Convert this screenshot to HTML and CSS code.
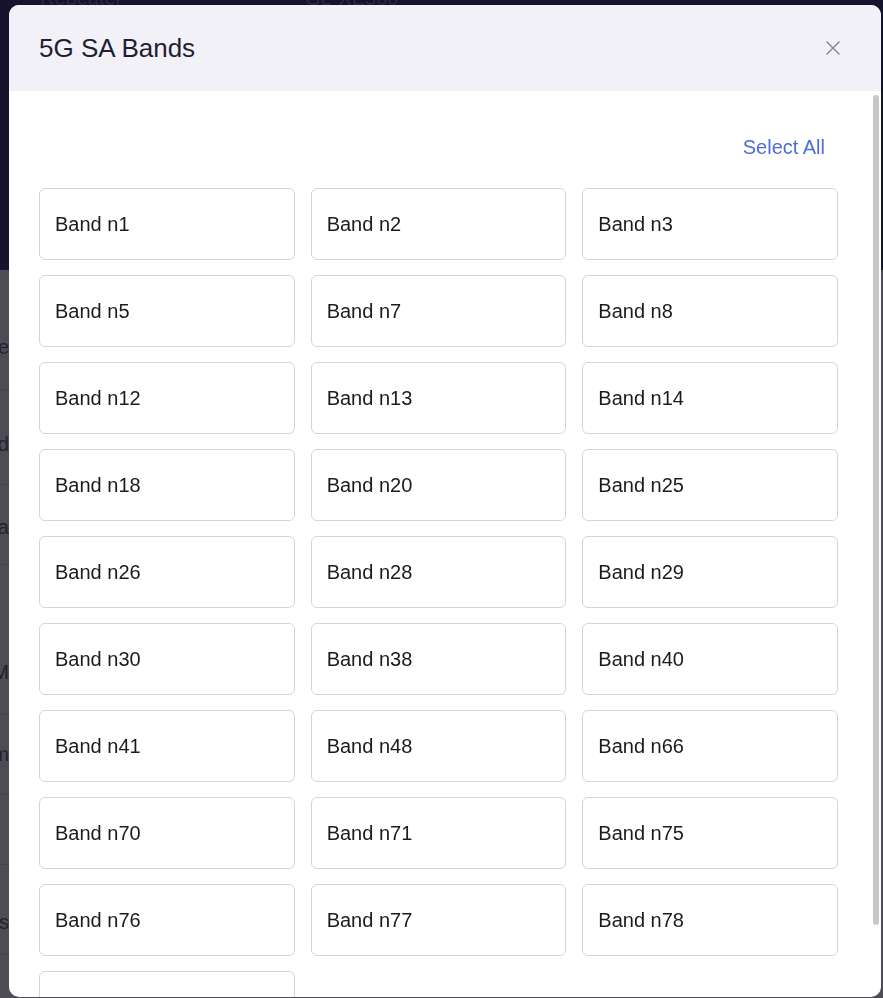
FILE: index.html
```html
<!DOCTYPE html>
<html>
    <head>
        <link rel="stylesheet" href="styles.css">
    </head>
    <body>
        <div class="backdrop">
            <div class="backdrop-top">
                <span class="faint-left">Repeater</span>
                <span class="faint-right">GL-XE300</span>
            </div>
            <div class="backdrop-rows">
                <div class="bg-row r1"><span>Mode</span></div>
                <div class="bg-row r2"><span>Band</span></div>
                <div class="bg-row r3"><span>Data</span></div>
                <div class="bg-row r4"><span>PIM</span></div>
                <div class="bg-row r5"><span>Form</span></div>
                <div class="bg-row r6"><span></span></div>
                <div class="bg-row r7"><span>Options</span></div>
                <div class="bg-row r8"><span>Status</span></div>
            </div>
        </div>

        <div class="modal">
            <div class="modal-header">
                <h1>5G SA Bands</h1>
                <button class="close" type="button" aria-label="Close">
                    <svg width="16" height="16" viewBox="0 0 16 16">
                        <path d="M1.5 1.5 L14.5 14.5 M14.5 1.5 L1.5 14.5" stroke="#8c8c8f" stroke-width="1.5" fill="none"/>
                    </svg>
                </button>
            </div>

            <div class="modal-body">
                <div class="toolbar">
                    <a class="select-all" href="#">Select All</a>
                </div>
                <div class="band-grid" id="bandGrid"></div>
            </div>

            <div class="scroll-thumb"></div>
        </div>

        <script>
            var bands = [1, 2, 3, 5, 7, 8, 12, 13, 14, 18, 20, 25, 26, 28, 29, 30,
                38, 40, 41, 48, 66, 70, 71, 75, 76, 77, 78, 79];
            var grid = document.getElementById("bandGrid");
            bands.forEach(function (n) {
                var card = document.createElement("div");
                card.className = "band";
                card.textContent = "Band n" + n;
                grid.appendChild(card);
            });
        </script>
    </body>
</html>
```

FILE: styles.css
```css
* {
    box-sizing: border-box;
}

body {
    margin: 0;
    background-color: #4d4c55;
    font-family: "Liberation Sans", Arial, sans-serif;
    overflow: hidden;
}

.backdrop {
    height: 100vh;
}

.backdrop-top {
    height: 270px;
    background-color: #16132c;
    position: relative;
    color: #2b2843;
    font-size: 20px;
}

.faint-left {
    position: absolute;
    left: 40px;
    top: -13px;
}

.faint-right {
    position: absolute;
    left: 305px;
    top: -13px;
}

.backdrop-rows {
    display: flex;
    flex-direction: column;
}

.bg-row {
    width: 9px;
    display: flex;
    justify-content: flex-end;
    overflow: hidden;
    white-space: nowrap;
    color: #23222e;
    font-size: 20px;
    border-bottom: 1px solid #45444c;
}

.r1 { height: 120px; align-items: flex-end; padding-bottom: 30px; }
.r2 { height: 95px; align-items: flex-end; padding-bottom: 28px; }
.r3 { height: 80px; align-items: flex-end; padding-bottom: 25px; }
.r4 { height: 150px; align-items: flex-end; padding-bottom: 30px; }
.r5 { height: 80px; align-items: flex-end; padding-bottom: 28px; }
.r6 { height: 70px; }
.r7 { height: 90px; align-items: flex-end; padding-bottom: 20px; }
.r8 { height: 80px; align-items: flex-end; padding-bottom: 10px; }

.modal {
    position: fixed;
    left: 9px;
    top: 5px;
    width: 872px;
    height: 992px;
    background-color: white;
    border-radius: 10px;
    overflow: hidden;
    display: flex;
    flex-direction: column;
}

.modal-header {
    height: 86px;
    flex-shrink: 0;
    background-color: #f2f1f7;
    display: flex;
    align-items: center;
    justify-content: space-between;
    padding: 0 40px 0 30px;
}

.modal-header h1 {
    margin: 0;
    font-size: 26px;
    font-weight: normal;
    color: #1f1e33;
}

.close {
    border: none;
    background: none;
    padding: 0;
    width: 16px;
    height: 16px;
    cursor: pointer;
}

.modal-body {
    flex: 1;
    overflow: hidden;
    padding: 40px 43px 30px 30px;
}

.toolbar {
    height: 32px;
    display: flex;
    align-items: center;
    justify-content: flex-end;
    margin-bottom: 25px;
    padding-right: 13px;
}

.select-all {
    color: #4f6dd6;
    font-size: 20px;
    text-decoration: none;
}

.band-grid {
    display: grid;
    grid-template-columns: repeat(3, 1fr);
    column-gap: 16px;
    row-gap: 15px;
}

.band {
    height: 72px;
    border: 1px solid #d4d4d8;
    border-radius: 6px;
    display: flex;
    align-items: center;
    padding-left: 15px;
    font-size: 20px;
    color: #1b1b1f;
}

.scroll-thumb {
    position: absolute;
    left: 864px;
    top: 90px;
    width: 6px;
    height: 830px;
    border-radius: 3px;
    background-color: #c6c6cb;
}
```
